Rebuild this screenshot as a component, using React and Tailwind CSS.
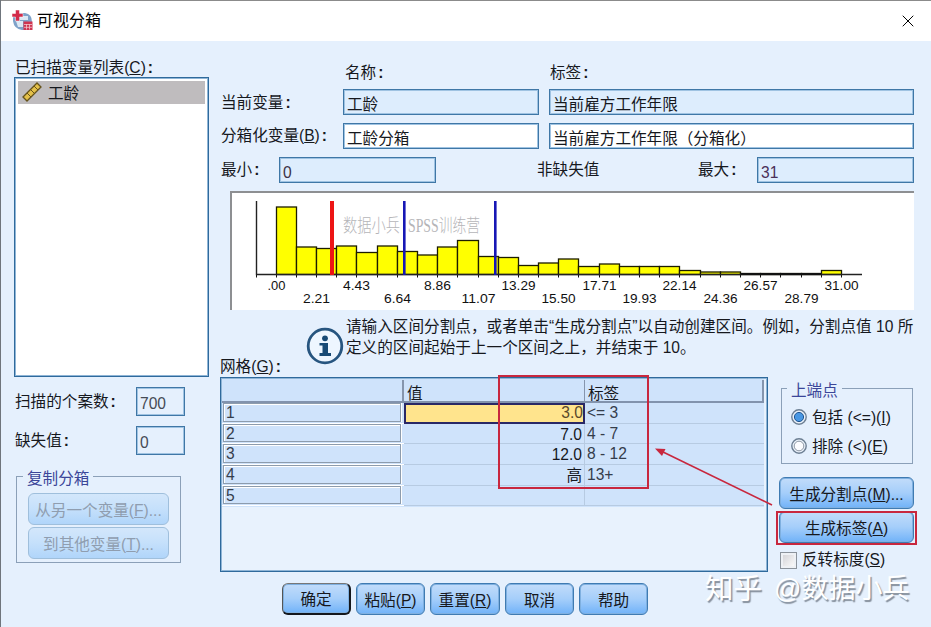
import React from 'react';
import { X } from 'lucide-react';

const bars = [67.5, 27.5, 26, 28.5, 22, 28.5, 23, 19.5, 27.5, 34, 18, 17, 9, 11.5, 15.5, 8, 10.5, 8, 8, 8, 4, 2.5, 2.5, 1, 1, 1, 1, 4];
const ticks = ['.00', '2.21', '4.43', '6.64', '8.86', '11.07', '13.29', '15.50', '17.71', '19.93', '22.14', '24.36', '26.57', '28.79', '31.00'];
const rows = [
    { value: '3.0', label: '<= 3' },
    { value: '7.0', label: '4 - 7' },
    { value: '12.0', label: '8 - 12' },
    { value: '高', label: '13+' },
    { value: '', label: '' },
];

export default function App() {
    return (
        <div className="relative w-[931px] h-[627px] overflow-hidden bg-[#e5f0fd] border-l border-[#6f757c] font-['Liberation_Sans','Noto_Sans_CJK_SC',sans-serif] text-[15.6px] leading-5 text-[#16181d] whitespace-nowrap">
            <header className="h-[41px] bg-white border-t border-[#8b8b8b] flex items-center pl-[11px] pr-[13px]">
                <AppIcon />
                <span className="ml-[4px] text-[16px] text-black">可视分箱</span>
                <X size={20} strokeWidth={1.2} className="ml-auto text-black" />
            </header>

            <main className="flex pt-[16px] pl-[13px]">
                <VariablePanel />
                <section className="ml-[11px] w-[694px]">
                    <NameFields />
                    <Histogram />
                    <div className="flex h-[67px]">
                        <div className="w-[86px] self-end">网格(<u>G</u>)<Colon /></div>
                        <InfoIcon />
                        <p className="mt-[6px] ml-[2px] leading-[21px] tracking-[0.02px]">
                            请输入区间分割点，或者单击“生成分割点”以自动创建区间。例如，分割点值 10 所<br />
                            定义的区间起始于上一个区间之上，并结束于 10。
                        </p>
                    </div>
                    <div className="flex">
                        <Grid />
                        <EndpointPanel />
                    </div>
                </section>
            </main>

            <footer className="flex gap-[5px] pl-[281px] mt-[11px]">
                <Button className="w-[69px] !border-[#14171c] !border-t-[#777] !border-l-[#555] border-r-2 border-b-2">确定</Button>
                <Button className="w-[69px]">粘贴(<u>P</u>)</Button>
                <Button className="w-[70px]">重置(<u>R</u>)</Button>
                <Button className="w-[69px]">取消</Button>
                <Button className="w-[69px]">帮助</Button>
            </footer>

            {/* Annotations drawn over the dialog */}
            <div className="absolute left-[497px] top-[375px] w-[151px] h-[114px] border-2 border-[#c8273e]" />
            <div className="absolute left-[775px] top-[511px] w-[141px] h-[34px] border-2 border-[#c8273e]" />
            <svg className="absolute left-[650px] top-[440px]" width="125" height="70" fill="none">
                <path d="M10 11 L121 65" stroke="#c8273e" strokeWidth="1.6" />
                <path d="M4 8.5 L14.5 9 L11 16 Z" fill="#c8273e" />
            </svg>
            <div className="absolute left-[704px] top-[572px] flex text-[28.5px] leading-[34px] text-white [text-shadow:1.5px_1.5px_1px_#858f9c]">
                <span className="w-[69px]">知乎</span>
                <span className="text-[27px]">@数据小兵</span>
            </div>
        </div>
    );
}

const Colon = () => <b className="inline-block w-[15px] pl-[2px]">:</b>;

const Button = ({ className = '', children }) => (
    <button className={`h-[32px] rounded-[6px] border border-[#3f7bb2] shadow-[inset_0_0_0_1px_#7fb0e0] bg-linear-to-b from-[#c2dcfa] via-[#a5cefa] to-[#70b2f8] flex items-center justify-center pt-[3px] ${className}`}>
        <span>{children}</span>
    </button>
);

const Field = ({ className = '', children }) => (
    <div className={`h-[26px] border border-[#3f77a6] shadow-[inset_0_0_0_1px_#9fc3e2] flex items-center pl-[3px] pt-[5px] ${className}`}>{children}</div>
);

const VariablePanel = () => (
    <aside className="w-[195px]">
        <div className="pl-px pt-px h-[20px]">已扫描变量列表(<u>C</u>)<Colon /></div>
        <div className="h-[300px] bg-white border border-[#2f6a9c] shadow-[inset_0_0_0_1px_#8fb5d6] p-[3px]">
            <div className="h-[23px] bg-[#bfbcbe] flex items-center pl-[4px] pt-[2px]">
                <RulerIcon />
                <span className="ml-[6px]">工龄</span>
            </div>
        </div>
        <div className="mt-[10px] flex items-center">
            <span className="w-[122px] pl-px">扫描的个案数<Colon /></span>
            <Field className="w-[49px] h-[29px] text-[#454b55]">700</Field>
        </div>
        <div className="mt-[10px] flex items-center">
            <span className="w-[122px] pl-px">缺失值<Colon /></span>
            <Field className="w-[49px] h-[29px] text-[#454b55]">0</Field>
        </div>
        <fieldset className="ml-[2px] mt-[11px] w-[165px] h-[97px] border border-[#8ba0b8] pl-[10px]">
            <legend className="-ml-[4px] px-[4px] pt-[3px] h-[20px] leading-5 text-[#3b4699]">复制分箱</legend>
            <Button className="mt-[7px] ml-px w-[141px] !border-[#9fbfdc] !shadow-none !from-[#d3e7fb] !via-[#c5e0fb] !to-[#b0d5fa] text-[#8f9daf]">从另一个变量(<u>F</u>)...</Button>
            <Button className="mt-[2px] ml-px w-[141px] !border-[#9fbfdc] !shadow-none !from-[#d3e7fb] !via-[#c5e0fb] !to-[#b0d5fa] text-[#8f9daf]">到其他变量(<u>T</u>)...</Button>
        </fieldset>
    </aside>
);

const NameFields = () => (
    <>
        <div className="grid grid-cols-[112px_196px_365px] gap-x-[10px] gap-y-[8px] items-center pl-px pt-[4px]">
            <span />
            <span className="pl-[2px] pt-[2px] h-[20px]">名称<Colon /></span>
            <span className="pl-px pt-[2px] h-[20px]">标签<Colon /></span>
            <span className="pt-[2px]">当前变量<Colon /></span>
            <Field className="bg-[#ddedfd]">工龄</Field>
            <Field className="bg-[#ddedfd]">当前雇方工作年限</Field>
            <span>分箱化变量(<u>B</u>)<Colon /></span>
            <Field className="bg-white">工龄分箱</Field>
            <Field className="bg-white">当前雇方工作年限（分箱化）</Field>
        </div>
        <div className="mt-[8px] flex items-center pl-px">
            <span className="w-[58px]">最小<Colon /></span>
            <Field className="w-[157px] bg-[#ddedfd] text-[#3c3345]">0</Field>
            <span className="ml-[101px] w-[161px]">非缺失值</span>
            <span className="w-[59px]">最大<Colon /></span>
            <Field className="w-[157px] bg-[#ddedfd] text-[#4a3058]">31</Field>
        </div>
    </>
);

const Histogram = () => {
    const edge = (i) => Math.round(43.6 + i * 20.19) + 0.5;
    const base = 81.5;
    return (
        <div className="mt-[8px] ml-[10px] w-[684px] h-[119px] bg-white border-t-2 border-l-2 border-[#8d8f92]">
            <svg width="682" height="117" fontSize="12.5" fill="#111">
                <text x="111" y="39" fontSize="18" fill="#b5b5b8" textLength="57" lengthAdjust="spacingAndGlyphs" fontFamily="Noto Sans CJK SC" fontWeight="300">数据小兵</text>
                <text x="176" y="39" fontSize="18" fill="#b5b5b8" textLength="72" lengthAdjust="spacingAndGlyphs" fontFamily="Liberation Serif, Noto Sans CJK SC" fontWeight="300">SPSS训练营</text>
                {bars.map((h, i) => (
                    <rect key={i} x={edge(i)} y={base - h} width={edge(i + 1) - edge(i)} height={h} fill="#ff0" stroke="#1c1c00" strokeWidth="1.3" />
                ))}
                {[24.5, ...Array.from({ length: 29 }, (_, i) => edge(i))].map((x) => (
                    <path key={x} d={`M${x} ${base}v3`} stroke="#111" />
                ))}
                <path d="M24.5 8V81.5H630" fill="none" stroke="#222" strokeWidth="1.4" />
                {/* the last bins are nearly empty and read as a thick line */}
                <path d={`M${edge(23)} 81H${edge(27)}`} stroke="#111" strokeWidth="2.2" />
                {ticks.map((t, i) => (
                    <text key={t} x={edge(i * 2)} y={i % 2 ? 110 : 97} textAnchor="middle" textLength={t.length === 5 ? 34 : t.length === 4 ? 27 : 18} lengthAdjust="spacingAndGlyphs">{t}</text>
                ))}
                <rect x="98" y="8" width="4" height="74" fill="#ed1515" />
                <rect x="171" y="8" width="2.6" height="74" fill="#1717b5" />
                <rect x="262" y="8" width="2.6" height="74" fill="#1717b5" />
            </svg>
        </div>
    );
};

const Grid = () => (
    <div className="w-[548px] h-[195px] border border-[#2f6a9c] shadow-[inset_0_0_0_1px_#8fb5d6] bg-[#e8f2fd] p-px">
        <div className="h-[127.5px] bg-[#cfe3fb] mr-[2px]">
            <div className="flex h-[24px] border-b-2 border-[#8293ad] pt-px">
                <div className="w-[182px] border-r-2 border-[#8595ad]" />
                <div className="w-[181px] border-r border-[#8595ad] pl-[3px] pt-[4px]">值</div>
                <div className="flex-1 border-r-2 border-[#8595ad] pl-[3px] pt-[4px]">标签</div>
            </div>
            {rows.map((row, i) => (
                <div key={i} className="flex h-[20.7px]">
                    <div className="w-[182px] border-b border-white pl-px pr-[3px] pb-px">
                        <div className="h-full border border-[#8d9cad] shadow-[inset_1px_1px_0_#fff,1px_0_0_#fff] pl-[2px] leading-[18px] text-[#353d4b]">{i + 1}</div>
                    </div>
                    <div className={`w-[181px] text-right ${i === 0 ? 'bg-[#ffe48d] border-2 border-[#292866] leading-[16px] text-[#59482b]' : 'leading-[21px] border-r border-b border-[#b7cbe2] pr-[2px]'}`}>{row.value}</div>
                    <div className="flex-1 border-b border-[#b7cbe2] pl-[2px] leading-[20px] text-[#353d4b]">{row.label}</div>
                </div>
            ))}
        </div>
    </div>
);

const EndpointPanel = () => (
    <div className="ml-[11px] w-[135px]">
        <fieldset className="ml-[2px] w-[132px] h-[86px] mt-px border border-[#8ba0b8] pl-[9px]">
            <legend className="-ml-[4px] px-[4px] pt-[3px] h-[20px] leading-5 text-[#3b4699]">上端点</legend>
            <div className="mt-[8px] flex items-center">
                <Radio checked />
                <span className="ml-[5px] pt-[2px]">包括 (&lt;=)(<u>I</u>)</span>
            </div>
            <div className="mt-[7px] flex items-center">
                <Radio />
                <span className="ml-[5px] pt-[2px]">排除 (&lt;)(<u>E</u>)</span>
            </div>
        </fieldset>
        <Button className="mt-[13px] w-[135px]">生成分割点(<u>M</u>)...</Button>
        <Button className="mt-[2px] w-[135px]">生成标签(<u>A</u>)</Button>
        <div className="mt-[7px] flex items-center">
            <span className="ml-px w-[17px] h-[17px] border border-[#8b939c] bg-linear-to-br from-[#cfcfd3] to-white shadow-[inset_0_0_0_2px_#eef1f5]" />
            <span className="ml-[5px]">反转标度(<u>S</u>)</span>
        </div>
    </div>
);

const Radio = ({ checked }) => (
    <svg width="16" height="16" viewBox="0 0 16 16">
        <circle cx="8" cy="8" r="7.200" fill="#e9f1fa" stroke="#6d7f93" strokeWidth="1.4" />
        {checked
            ? <circle cx="8" cy="8" r="4.6" fill="#4897e3" stroke="#1f5490" />
            : <circle cx="8" cy="8" r="4.8" fill="#fbfcff" stroke="#8f99a6" />}
    </svg>
);

const InfoIcon = () => (
    <svg className="mt-[17px] shrink-0" width="38" height="38" viewBox="0 0 38 38">
        <circle cx="19" cy="19" r="16.8" fill="#eef6ff" stroke="#27557f" strokeWidth="2.8" />
        <circle cx="19" cy="11.3" r="2.9" fill="#184a75" />
        <path d="M13.5 16H22V26H25V29H13.5V26H16.5V18.5H13.5Z" fill="#184a75" />
    </svg>
);

const RulerIcon = () => (
    <svg width="20" height="20" viewBox="0 0 20 20" className="-mt-[4px]">
        <path d="M1 15 L15 1 L19 5 L5 19 Z" fill="#e4c04a" stroke="#66531b" strokeWidth="1.3" />
        <path d="M5 11l4 4M8.500 7.500l4 4M12 4l4 4" stroke="#66531b" />
    </svg>
);

const AppIcon = () => (
    <svg width="21" height="21" viewBox="0 0 21 21" className="-mt-[2px]">
        <path d="M6 3H13Q20 4 20 12V20H10Q2 19 1 11V6Z" fill="#7fa2c9" />
        <path d="M8 6h8v4H8zM4 11h7v6H6z" fill="#dce8f4" />
        <path d="M3.500 0h4v3.500H11v3.500H7.500v4h-4V7H0V3.500h3.500z" fill="#d22b4a" stroke="#fff" strokeWidth=".5" />
        <rect x="11.500" y="11.500" width="9" height="8.500" fill="#cf3450" />
        <path d="M12 14.500h8M12 17.300h8M14.500 14v5.500M17.500 14v5.500" stroke="#f3c4cc" strokeWidth=".8" />
    </svg>
);
